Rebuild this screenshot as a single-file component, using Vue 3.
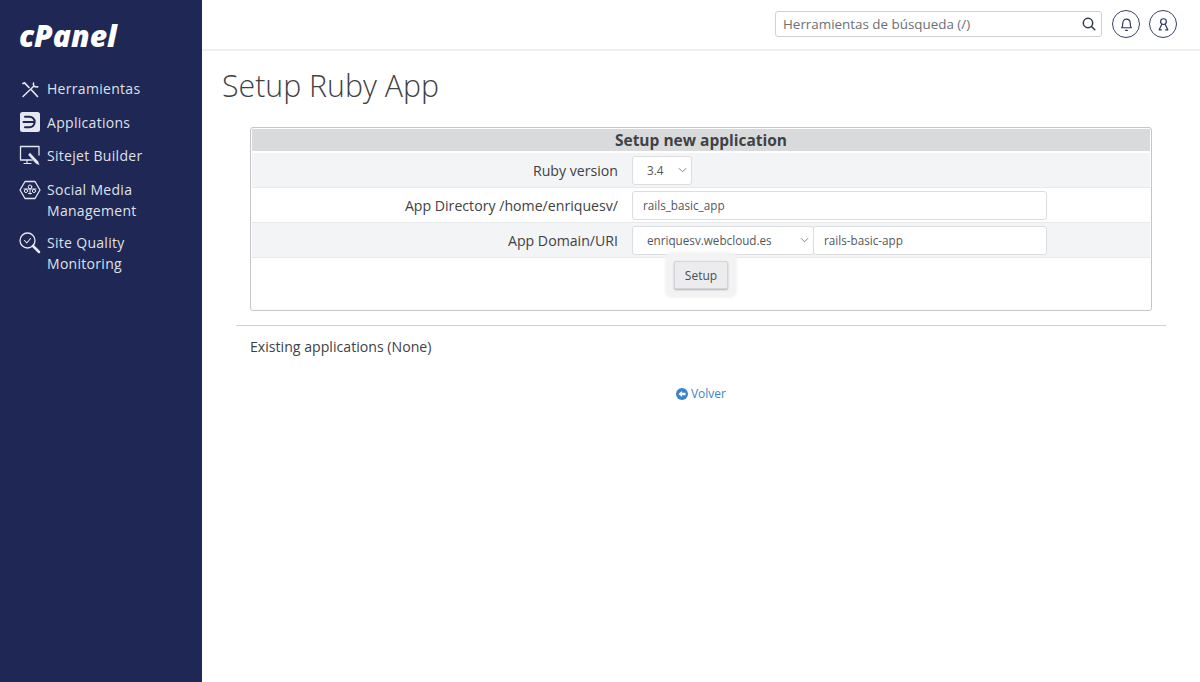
<template>
  <div class="page">
    <aside class="sidebar">
      <div class="logo">cPanel</div>
      <nav class="menu">
        <a v-for="item in menu" :key="item.label" class="menu-item">
          <svg class="menu-icon" viewBox="0 0 22 22" fill="none" stroke="currentColor" stroke-width="1.3" stroke-linecap="round" stroke-linejoin="round">
            <template v-if="item.icon === 'tools'">
              <path d="M4 18.500 L14.500 8.500" stroke-width="1.500" />
              <path d="M14.500 5 C13.800 7.500 15.500 9.500 18.800 8.800" stroke-width="1.500" />
              <path d="M4 5.500 L5.500 4.800 L10 9.500 M12.500 12 L18.500 18.500" stroke-width="1.700" />
            </template>
            <template v-else-if="item.icon === 'apps'">
              <rect x="1" y="0" width="20" height="20" rx="2.500" fill="currentColor" stroke="none" />
              <path d="M6 4.800 H10.500 A5.200 5.200 0 0 1 10.500 15.200 H6 M4.500 10 H15" stroke="#1f2754" stroke-width="2" />
            </template>
            <template v-else-if="item.icon === 'sitejet'">
              <path d="M14 15 H1.500 V1.500 H20 V10" />
              <path d="M8 15 V18 M5 18.500 H12" stroke-width="1.100" />
              <path d="M11 7.500 L19.500 16.500 L20.800 20.500 L17 19 L9 10 Z" fill="currentColor" stroke="#1f2754" stroke-width="0.600" />
            </template>
            <template v-else-if="item.icon === 'social'">
              <path d="M6 2.500 H16 L21 11 L16 19.500 H6 L1 11 Z" />
              <circle cx="11" cy="7.800" r="1.800" stroke-width="1" />
              <circle cx="7" cy="12" r="1.600" stroke-width="1" />
              <circle cx="15" cy="12" r="1.600" stroke-width="1" />
              <path d="M5 10 H17 M11 10 V15 M9.500 14.500 H12.500" stroke-width="1" />
            </template>
            <template v-else>
              <circle cx="8.500" cy="8.500" r="7.500" />
              <path d="M5.500 8.500 L7.800 11 L11.500 6.500" stroke-width="1.100" />
              <path d="M14 14 L20 20" stroke-width="2.600" />
            </template>
          </svg>
          <span class="menu-label">{{ item.label }}</span>
        </a>
      </nav>
    </aside>

    <div class="content">
      <header class="topbar">
        <div class="search">
          <span class="search-text">Herramientas de búsqueda (/)</span>
          <svg class="search-icon" viewBox="0 0 14 14" fill="none" stroke="#33384f" stroke-width="1.500" stroke-linecap="round">
            <circle cx="6" cy="6" r="4.700" />
            <path d="M9.500 9.500 L12.800 12.800" />
          </svg>
        </div>
        <button class="round-btn" type="button">
          <svg viewBox="0 0 14 14" fill="none" stroke="#2c3563" stroke-width="1.100" stroke-linecap="round" stroke-linejoin="round">
            <path d="M2.500 10 C3.500 9 3.500 8 3.500 6 C3.500 3.500 5 2 7 2 C9 2 10.500 3.500 10.500 6 C10.500 8 10.500 9 11.500 10 Z" />
            <path d="M6.200 12.500 H7.800" />
          </svg>
        </button>
        <button class="round-btn" type="button">
          <svg viewBox="0 0 14 14" fill="none" stroke="#2c3563" stroke-width="1.100" stroke-linecap="round" stroke-linejoin="round">
            <circle cx="7" cy="4.300" r="2.700" />
            <path d="M5.300 7 L3 12 H5 M8.700 7 L11 12 H9" />
          </svg>
        </button>
      </header>

      <main class="main">
        <h1 class="title">Setup Ruby App</h1>

        <section class="form-box">
          <div class="form-head">Setup new application</div>

          <div class="form-row shaded">
            <label class="form-label">Ruby version</label>
            <div class="fields">
              <div class="select version">3.4<svg class="chevron" viewBox="0 0 10 6"><path d="M1 1 L5 5 L9 1" /></svg></div>
            </div>
          </div>

          <div class="form-row">
            <label class="form-label">App Directory /home/enriquesv/</label>
            <div class="fields">
              <div class="text-input wide">rails_basic_app</div>
            </div>
          </div>

          <div class="form-row shaded">
            <label class="form-label">App Domain/URI</label>
            <div class="fields">
              <div class="select domain">enriquesv.webcloud.es<svg class="chevron" viewBox="0 0 10 6"><path d="M1 1 L5 5 L9 1" /></svg></div>
              <div class="text-input uri">rails-basic-app</div>
            </div>
          </div>

          <div class="form-actions">
            <button class="setup-btn" type="button">Setup</button>
          </div>
        </section>

        <hr class="divider" />

        <p class="existing">Existing applications (None)</p>

        <div class="back">
          <a class="back-link">
            <svg viewBox="0 0 12 12"><circle cx="6" cy="6" r="6" fill="#3a84c9" /><path d="M2.500 6 L6 3 V4.800 H9.500 V7.200 H6 V9 Z" fill="#fff" /></svg>
            Volver
          </a>
        </div>
      </main>
    </div>
  </div>
</template>

<script setup>
const menu = [
  { label: 'Herramientas', icon: 'tools' },
  { label: 'Applications', icon: 'apps' },
  { label: 'Sitejet Builder', icon: 'sitejet' },
  { label: 'Social Media Management', icon: 'social' },
  { label: 'Site Quality Monitoring', icon: 'quality' },
]
</script>

<style>
html,
body {
  margin: 0;
  background: #fff;
}
</style>

<style scoped>
.page {
  display: flex;
  height: 682px;
  overflow: hidden;
  font-family: "Open Sans", "Liberation Sans", sans-serif;
  color: #3f4245;
}

.sidebar {
  width: 202px;
  flex-shrink: 0;
  background: #1f2754;
  color: #dfe1ea;
}

.logo {
  padding: 17px 0 0 19px;
  height: 55px;
  box-sizing: border-box;
  font-size: 30px;
  line-height: 38px;
  font-weight: 800;
  font-style: italic;
  color: #fff;
}

.menu {
  display: flex;
  flex-direction: column;
  gap: 11.6px;
  padding: 23px 0 0 19px;
}

.menu-item {
  display: flex;
  align-items: flex-start;
  gap: 6px;
}

.menu-icon {
  width: 22px;
  height: 22px;
  flex-shrink: 0;
  color: #e6e8f0;
}

.menu-label {
  width: 110px;
  font-size: 14px;
  line-height: 21px;
  letter-spacing: 0.3px;
}

.content {
  flex: 1;
  min-width: 0;
}

.topbar {
  display: flex;
  align-items: center;
  justify-content: flex-end;
  gap: 9px;
  height: 48px;
  padding: 0 23px 1px 0;
  border-bottom: 2px solid #eeeff2;
}

.search {
  display: flex;
  align-items: center;
  justify-content: space-between;
  width: 327px;
  height: 26px;
  box-sizing: border-box;
  margin-right: 1px;
  padding: 0 5px 0 7px;
  border: 1px solid #cfd2dc;
  border-radius: 3px;
  font-size: 13.4px;
  color: #6b6f76;
}

.search-icon {
  width: 14px;
  height: 14px;
}

.round-btn {
  display: flex;
  align-items: center;
  justify-content: center;
  width: 28px;
  height: 28px;
  padding: 0;
  border: 1px solid #3a4268;
  border-radius: 50%;
  background: #fff;
}

.round-btn svg {
  width: 15px;
  height: 15px;
}

.main {
  padding: 0 34px;
}

.title {
  margin: 15px 0 0 -14px;
  font-size: 30.3px;
  line-height: 40px;
  font-weight: 300;
  color: #3f4245;
}

.form-box {
  width: 902px;
  height: 184px;
  box-sizing: border-box;
  margin: 21px 0 0 14px;
  padding: 1px;
  border: 1px solid #c4c5c8;
  border-radius: 3px;
}

.form-head {
  height: 22px;
  margin-bottom: 2px;
  background: #d9dadc;
  text-align: center;
  font-size: 15.5px;
  line-height: 22px;
  font-weight: 700;
}

.form-row {
  display: flex;
  align-items: center;
  height: 35px;
  box-sizing: border-box;
  border-bottom: 1px solid #e8e9eb;
}

.form-row.shaded {
  background: #f3f4f6;
}

.form-label {
  width: 366px;
  flex-shrink: 0;
  text-align: right;
  font-size: 14.15px;
}

.fields {
  display: flex;
  margin-left: 14px;
}

.select,
.text-input {
  display: flex;
  align-items: center;
  height: 29px;
  box-sizing: border-box;
  background: #fff;
  border: 1px solid #dcdde1;
  border-radius: 3px;
  font-size: 11.7px;
  color: #54575b;
}

.select {
  justify-content: space-between;
  padding: 0 2px 0 14px;
}

.version {
  width: 60px;
}

.domain {
  width: 182px;
}

.text-input {
  padding-left: 10px;
}

.wide {
  width: 415px;
}

.uri {
  width: 234px;
  margin-left: -1px;
}

.chevron {
  width: 9px;
  height: 6px;
  margin-right: 2px;
  fill: none;
  stroke: #777;
  stroke-width: 1;
}

.form-actions {
  display: flex;
  justify-content: center;
  padding-top: 3px;
}

.setup-btn {
  width: 54px;
  height: 28px;
  padding: 0;
  border: 1px solid #d4d5d8;
  border-radius: 2px;
  background: #ececee;
  box-shadow: 0 1px 2px #b0b1b4, 0 0 3px 9px #f3f3f4;
  font-family: inherit;
  font-size: 12px;
  color: #4a4d51;
}

.divider {
  width: 930px;
  margin: 14px 0 0;
  border: 0;
  border-top: 1px solid #cfd0d2;
}

.existing {
  margin: 11px 0 0 14px;
  font-size: 14.15px;
  line-height: 19px;
}

.back {
  display: flex;
  justify-content: center;
  width: 930px;
  margin-top: 29px;
}

.back-link {
  display: flex;
  align-items: center;
  gap: 3px;
  font-size: 12px;
  line-height: 18px;
  color: #3a84c9;
}

.back-link svg {
  width: 12px;
  height: 12px;
}
</style>
